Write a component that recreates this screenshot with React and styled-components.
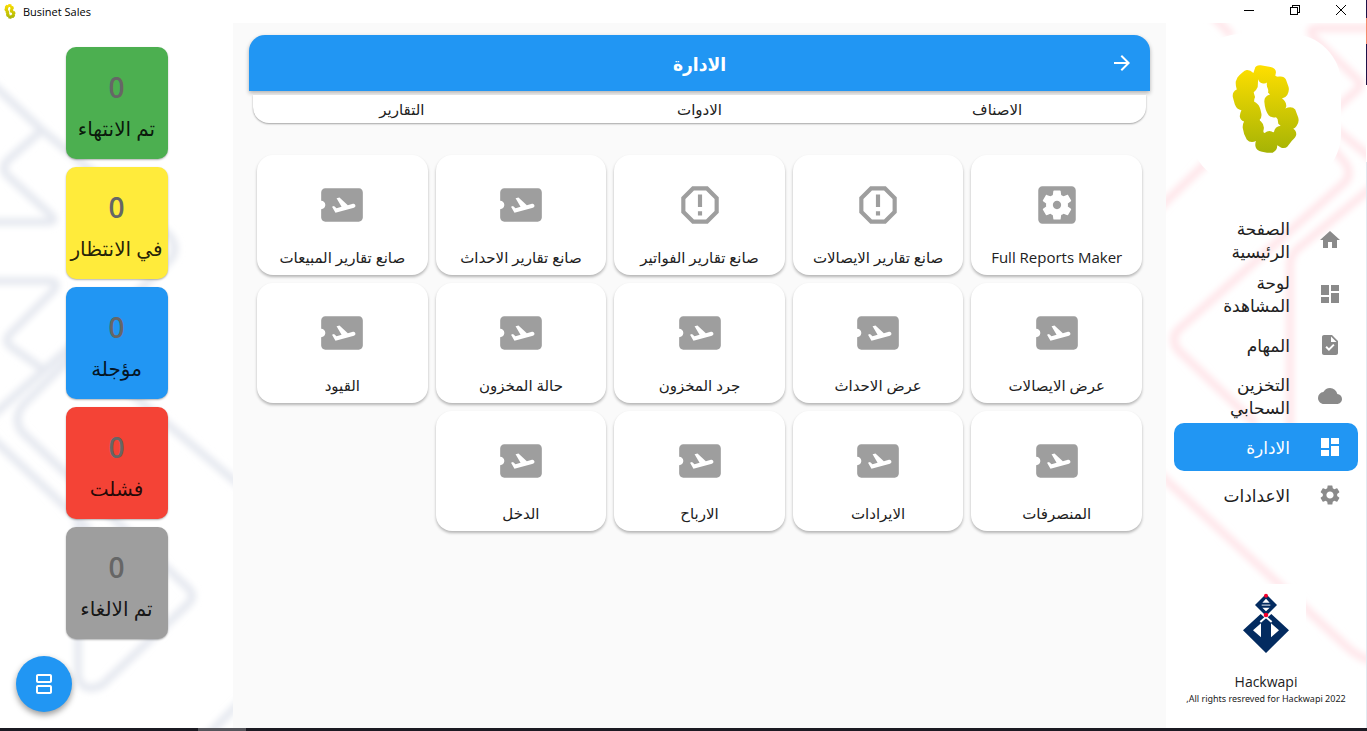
import React from "react";
import styled, { createGlobalStyle } from "styled-components";
import {
  MdHome,
  MdDashboard,
  MdTask,
  MdCloud,
  MdSettings,
  MdAirplaneTicket,
  MdReportGmailerrorred,
  MdSettingsApplications,
  MdSplitscreen,
  MdArrowForward,
} from "react-icons/md";

const Global = createGlobalStyle`
  *, *::before, *::after { box-sizing: border-box; }
  body {
    margin: 0;
    background: #fff;
    color: #212121;
    font-family: "Open Sans", "DejaVu Sans", sans-serif;
  }
  button { font: inherit; color: inherit; border: 0; padding: 0; cursor: pointer; }
  a { color: inherit; text-decoration: none; }
`;

const Desktop = styled.div`
  display: grid;
  grid-template-columns: minmax(0, 1fr) 1px;
  grid-template-rows: minmax(0, 1fr) 3px;
  min-height: 100vh;
`;

const DesktopEdge = styled.div`
  background: linear-gradient(
    #1f1147 0 18px,
    #f58a6c 18px 44px,
    #1f1147 44px 85px,
    #fff 85px 162px,
    #e2e9f0 162px
  );
`;

const Taskbar = styled.div`
  grid-column: 1 / -1;
  display: flex;
  background: #1b1a22;
  padding-left: 198px;
`;

const TaskbarItem = styled.span`
  width: 48px;
  background: #55555b;
`;

const Window = styled.div`
  display: flex;
  flex-direction: column;
`;

const TitleBar = styled.header`
  display: flex;
  align-items: center;
  height: 23px;
  padding: 0 2px 0 4px;
  background: #fff;
  color: #000;
  font-size: 11px;
`;

const WindowTitle = styled.span`
  flex: 1;
  padding-left: 7px;
`;

const WindowButton = styled.button`
  display: flex;
  align-items: center;
  align-self: flex-start;
  justify-content: center;
  width: 46px;
  height: 20px;
  background: none;
`;

const Body = styled.div`
  flex: 1;
  display: grid;
  grid-template-columns: 200px minmax(0, 1fr) 233px;
`;

const Panel = styled.div`
  position: relative;
  display: flex;
  flex-direction: column;
  align-items: center;
  overflow: hidden;
  background: #fff;
`;

const Backdrop = styled.svg`
  position: absolute;
  top: 0;
  left: 0;
  pointer-events: none;
`;

const Main = styled.main`
  padding: 12px 16px;
  background: #fafafa;
`;

const PageHeader = styled.div`
  display: flex;
  align-items: center;
  height: 56px;
  padding: 0 16px;
  border-radius: 16px 16px 0 0;
  background: #2196f3;
  color: #fff;
  box-shadow: 0 2px 4px rgba(0, 0, 0, 0.3);
`;

const BackButton = styled.button`
  display: flex;
  background: none;
  font-size: 24px;
`;

const PageTitle = styled.h1`
  flex: 1;
  margin: 0;
  padding: 2px 0 0 24px;
  text-align: center;
  font-family: "DejaVu Sans Condensed", "DejaVu Sans", sans-serif;
  font-size: 19px;
  line-height: 28px;
  font-weight: 700;
`;

const Tabs = styled.div`
  display: grid;
  grid-template-columns: repeat(3, 1fr);
  height: 28px;
  margin: 4px 4px 0;
  border-radius: 0 0 16px 16px;
  background: #fff;
  box-shadow: 0 1px 2px rgba(0, 0, 0, 0.35);
  position: relative;
`;

const Tab = styled.button`
  padding-top: 1px;
  background: none;
  font-size: 15px;
  line-height: 27px;
  font-weight: 500;
`;

const Cards = styled.div`
  display: grid;
  grid-template-columns: repeat(5, minmax(0, 1fr));
  gap: 8px;
  padding: 32px 8px 0;
`;

const Card = styled.button`
  display: flex;
  flex-direction: column;
  align-items: center;
  height: 120px;
  padding-top: 25px;
  border-radius: 16px;
  background: #fff;
  box-shadow: 0 2px 3px rgba(0, 0, 0, 0.28);
  font-size: 15px;
  line-height: 20px;
  font-weight: 500;
  white-space: nowrap;

  svg {
    margin-bottom: 17px;
    font-size: 50px;
    color: #9e9e9e;
  }
`;

const AppLogo = styled.div`
  position: relative;
  display: flex;
  align-items: center;
  justify-content: center;
  width: 150px;
  height: 150px;
  margin-top: 11px;
  border-radius: 50px;
  background: #fff;
`;

const Nav = styled.nav`
  position: relative;
  display: flex;
  flex-direction: column;
  align-self: stretch;
  margin: 29px 8px 0;
`;

const NavLink = styled.a`
  display: flex;
  align-items: center;
  gap: 28px;
  height: ${(p) => (p.$tall ? 54 : 48)}px;
  padding: 0 16px;
  border-radius: 10px;
  background: ${(p) => (p.$active ? "#2196f3" : "transparent")};
  color: ${(p) => (p.$active ? "#fff" : "#212121")};
  font-size: 17px;
  line-height: 23px;
  white-space: pre-line;

  svg {
    flex: none;
    font-size: 24px;
    color: ${(p) => (p.$active ? "#fff" : "#8a8a8a")};
  }
`;

const Company = styled.footer`
  position: relative;
  display: flex;
  flex-direction: column;
  align-items: center;
  margin-top: auto;
  padding-bottom: 22px;
`;

const CompanyLogo = styled.div`
  display: flex;
  justify-content: center;
  width: 80px;
  height: 80px;
  padding-top: 8px;
  background: #fff;
`;

const CompanyName = styled.div`
  margin-top: 8px;
  font-size: 14px;
  line-height: 20px;
`;

const Rights = styled.div`
  font-family: "Noto Sans", "Open Sans", sans-serif;
  font-size: 9px;
  line-height: 14px;
  white-space: nowrap;
`;

const Stats = styled.div`
  position: relative;
  display: flex;
  flex-direction: column;
  gap: 8px;
  padding-top: 24px;
`;

const Stat = styled.button`
  display: flex;
  flex-direction: column;
  align-items: center;
  width: 102px;
  height: 112px;
  padding-top: 21px;
  border-radius: 10px;
  background: ${(p) => p.$color};
  box-shadow: 0 1px 2px rgba(0, 0, 0, 0.3);
`;

const StatValue = styled.span`
  font-size: 28px;
  line-height: 38px;
  font-weight: 600;
  color: #666;
`;

const StatLabel = styled.span`
  margin-top: 7px;
  font-size: 20px;
  line-height: 32px;
  white-space: nowrap;
  color: rgba(0, 0, 0, 0.87);
`;

const Fab = styled.button`
  position: absolute;
  left: 16px;
  bottom: 16px;
  display: flex;
  align-items: center;
  justify-content: center;
  width: 56px;
  height: 56px;
  border-radius: 50%;
  background: #2196f3;
  color: #fff;
  font-size: 24px;
  box-shadow: 0 3px 6px rgba(0, 0, 0, 0.4);
`;

const MARK_OUTLINE =
  "M88 26Q90 14 106 15L136 20Q152 24 152 36L150 46Q156 50 160 49Q176 46 182 58L190 80Q193 92 186 104Q180 113 170 115Q182 122 183 136Q184 140 180 145Q200 136 210 148L219 172Q223 186 214 198Q210 205 204 206Q214 212 213 224Q212 232 200 242L186 260Q180 266 168 263L156 256Q156 272 142 278Q134 280 110 275Q92 272 90 258Q89 248 92 243Q74 250 64 238Q54 222 52 204Q51 192 56 184Q44 180 43 168Q44 158 48 150Q34 148 28 132L22 110Q20 94 34 88Q30 76 31 64L36 52Q52 32 64 29Q74 28 84 38Z";
const MARK_HOLE =
  "M98 57Q102 68 110 69Q120 71 125 67Q123 75 127 84Q130 90 128 97L134 103Q116 108 117 125Q119 152 130 165Q138 174 152 171Q154 173 157 177L159 191L166 197Q148 200 146 216Q142 217 139 214Q128 210 118 219Q112 218 115 208Q118 194 107 184Q103 182 103 179Q110 172 108 160Q104 138 97 132Q88 124 86 124Q86 116 89 110Q86 102 85 96Q94 88 97 80Q98 68 98 57Z";

function BusinetMark({ id, width, height }) {
  return (
    <svg width={width} height={height} viewBox="20 14 204 268" aria-hidden="true">
      <defs>
        <linearGradient id={id} x1="0" y1="0" x2="0" y2="1">
          <stop offset="0" stopColor="#ffdf00" />
          <stop offset="1" stopColor="#a5b305" />
        </linearGradient>
      </defs>
      <path fill={`url(#${id})`} fillRule="evenodd" d={MARK_OUTLINE + MARK_HOLE} />
    </svg>
  );
}

function HackwapiMark() {
  return (
    <svg width="48" height="64" viewBox="246 66 144 192" aria-hidden="true">
      <path fill="#032b60" d="M318 72 285 105 318 138 351 105Z" />
      <path fill="#fff" d="M318 86 307 98H329ZM318 124 307 113H329Z" />
      <path fill="#8fa1b9" d="M305 103H331V108H305Z" />
      <path fill="#032b60" d="M302 132 249 181 318 249 387 181 334 132 318 146Z" />
      <path fill="#fff" d="M318 137 299 154 303 158 318 145 333 158 337 154Z" />
      <path fill="#fff" d="M279 181 303 160V202ZM357 181 333 160V202Z" />
      <circle cx="318" cy="77" r="6" fill="#f5002d" />
      <circle cx="318" cy="135" r="7" fill="#f5002d" />
    </svg>
  );
}

function NavBackdrop() {
  return (
    <Backdrop width="200" height="705" viewBox="1166 23 200 705" aria-hidden="true">
      <defs>
        <filter id="nav-soft" x="-10%" y="-10%" width="120%" height="120%">
          <feGaussianBlur stdDeviation="3" />
        </filter>
      </defs>
      <g fill="none" stroke="#ffe6ea" strokeWidth="8" strokeLinejoin="round" filter="url(#nav-soft)">
        <path d="M1212 15 1232 36" />
        <path d="M1380 28H1318Q1306 28 1314 38L1358 80Q1362 84 1358 89L1330 114" />
        <path d="M1330 124 1376 162" />
        <path d="M1230 140 1155 212" />
        <path d="M1326 140 1346 164Q1352 174 1345 182L1178 330Q1170 339 1178 350L1256 424" />
        <path d="M1376 184 1296 250Q1290 256 1290 266V430" />
        <path d="M1155 470 1346 646Q1360 660 1380 662" />
      </g>
    </Backdrop>
  );
}

function StatsBackdrop() {
  return (
    <Backdrop width="233" height="705" viewBox="0 23 233 705" aria-hidden="true">
      <defs>
        <filter id="stats-soft" x="-10%" y="-10%" width="120%" height="120%">
          <feGaussianBlur stdDeviation="3" />
        </filter>
      </defs>
      <g fill="none" stroke="#e6e9f0" strokeWidth="8" strokeLinejoin="round" filter="url(#stats-soft)">
        <path d="M-10 82 42 130 8 160Q0 168 8 176L52 216Q56 222 48 222H-10" />
        <path d="M42 130 168 234Q180 248 170 260L24 404Q12 418 22 432L90 496" />
        <path d="M-10 281H48Q60 281 54 290L10 334Q4 340 10 346L44 370 -10 418" />
        <path d="M-10 436 90 530" />
        <path d="M44 370 76 342" />
        <path d="M120 384 250 494" />
        <path d="M78 500V676Q82 694 102 685L188 604Q196 596 188 588L100 506" />
        <path d="M250 692 205 738" />
      </g>
    </Backdrop>
  );
}

const NAV_ITEMS = [
  { label: "الصفحة\nالرئيسية", icon: MdHome, tall: true },
  { label: "لوحة\nالمشاهدة", icon: MdDashboard, tall: true },
  { label: "المهام", icon: MdTask },
  { label: "التخزين\nالسحابي", icon: MdCloud, tall: true },
  { label: "الادارة", icon: MdDashboard, active: true },
  { label: "الاعدادات", icon: MdSettings },
];

const TABS = ["الاصناف", "الادوات", "التقارير"];

const CARDS = [
  ["Full Reports Maker", MdSettingsApplications],
  ["صانع تقارير الايصالات", MdReportGmailerrorred],
  ["صانع تقارير الفواتير", MdReportGmailerrorred],
  ["صانع تقارير الاحداث", MdAirplaneTicket],
  ["صانع تقارير المبيعات", MdAirplaneTicket],
  ["عرض الايصالات", MdAirplaneTicket],
  ["عرض الاحداث", MdAirplaneTicket],
  ["جرد المخزون", MdAirplaneTicket],
  ["حالة المخزون", MdAirplaneTicket],
  ["القيود", MdAirplaneTicket],
  ["المنصرفات", MdAirplaneTicket],
  ["الايرادات", MdAirplaneTicket],
  ["الارباح", MdAirplaneTicket],
  ["الدخل", MdAirplaneTicket],
];

const STATS = [
  ["تم الانتهاء", "#4caf50"],
  ["في الانتظار", "#ffeb3b"],
  ["مؤجلة", "#2196f3"],
  ["فشلت", "#f44336"],
  ["تم الالغاء", "#9e9e9e"],
];

export default function App() {
  return (
    <>
      <Global />
      <Desktop>
        <Window>
          <TitleBar>
            <BusinetMark id="title-mark" width="12" height="15" />
            <WindowTitle>Businet Sales</WindowTitle>
            <WindowButton aria-label="Minimize">
              <svg width="10" height="10" stroke="#000" fill="none" shapeRendering="crispEdges">
                <path d="M0 5.500H10" />
              </svg>
            </WindowButton>
            <WindowButton aria-label="Restore">
              <svg width="10" height="10" stroke="#000" fill="none" shapeRendering="crispEdges">
                <path d="M.5 2.500H7.500V9.500H.5ZM2.500 2.500V.5H9.500V7.500H7.500" />
              </svg>
            </WindowButton>
            <WindowButton aria-label="Close">
              <svg width="10" height="10" stroke="#000" fill="none">
                <path d="M0 0 10 10M10 0 0 10" />
              </svg>
            </WindowButton>
          </TitleBar>

          <Body dir="rtl">
            <Panel>
              <NavBackdrop />
              <AppLogo>
                <BusinetMark id="app-mark" width="68" height="89" />
              </AppLogo>
              <Nav>
                {NAV_ITEMS.map(({ label, icon: Icon, tall, active }) => (
                  <NavLink key={label} href="#" $tall={tall} $active={active}>
                    <Icon />
                    <span>{label}</span>
                  </NavLink>
                ))}
              </Nav>
              <Company>
                <CompanyLogo>
                  <HackwapiMark />
                </CompanyLogo>
                <CompanyName>Hackwapi</CompanyName>
                <Rights>All rights resreved for Hackwapi 2022,</Rights>
              </Company>
            </Panel>

            <Main>
              <PageHeader>
                <BackButton aria-label="رجوع">
                  <MdArrowForward />
                </BackButton>
                <PageTitle>الادارة</PageTitle>
              </PageHeader>
              <Tabs>
                {TABS.map((tab) => (
                  <Tab key={tab}>{tab}</Tab>
                ))}
              </Tabs>
              <Cards>
                {CARDS.map(([label, Icon]) => (
                  <Card key={label}>
                    <Icon />
                    {label}
                  </Card>
                ))}
              </Cards>
            </Main>

            <Panel>
              <StatsBackdrop />
              <Stats>
                {STATS.map(([label, color]) => (
                  <Stat key={label} $color={color}>
                    <StatValue>0</StatValue>
                    <StatLabel>{label}</StatLabel>
                  </Stat>
                ))}
              </Stats>
              <Fab aria-label="تغيير العرض">
                <MdSplitscreen />
              </Fab>
            </Panel>
          </Body>
        </Window>
        <DesktopEdge />
        <Taskbar>
          <TaskbarItem />
        </Taskbar>
      </Desktop>
    </>
  );
}
